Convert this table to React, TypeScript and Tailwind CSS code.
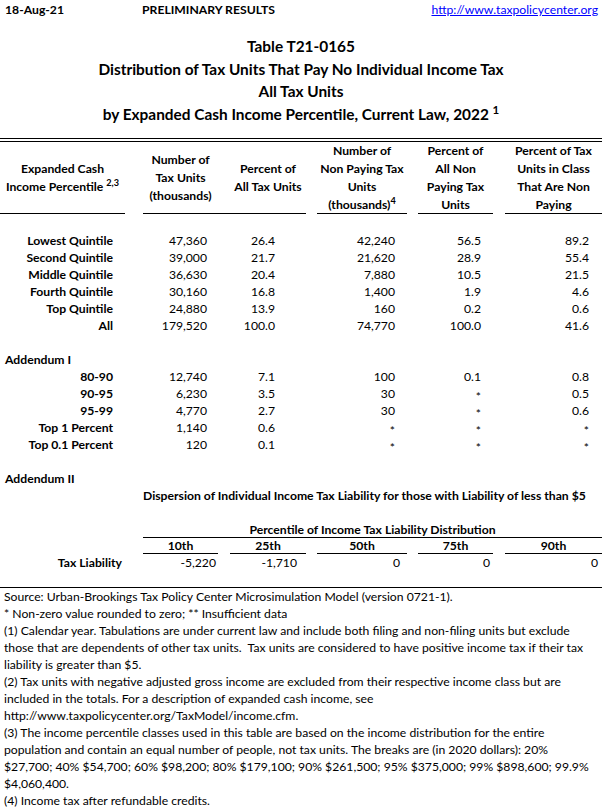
import * as React from 'react';

type Row = { label: string; v: string[] };

const quintiles: Row[] = [
  { label: 'Lowest Quintile', v: ['47,360', '26.4', '42,240', '56.5', '89.2'] },
  { label: 'Second Quintile', v: ['39,000', '21.7', '21,620', '28.9', '55.4'] },
  { label: 'Middle Quintile', v: ['36,630', '20.4', '7,880', '10.5', '21.5'] },
  { label: 'Fourth Quintile', v: ['30,160', '16.8', '1,400', '1.9', '4.6'] },
  { label: 'Top Quintile', v: ['24,880', '13.9', '160', '0.2', '0.6'] },
  { label: 'All', v: ['179,520', '100.0', '74,770', '100.0', '41.6'] },
];

const addendum: Row[] = [
  { label: '80-90', v: ['12,740', '7.1', '100', '0.1', '0.8'] },
  { label: '90-95', v: ['6,230', '3.5', '30', '*', '0.5'] },
  { label: '95-99', v: ['4,770', '2.7', '30', '*', '0.6'] },
  { label: 'Top 1 Percent', v: ['1,140', '0.6', '*', '*', '*'] },
  { label: 'Top 0.1 Percent', v: ['120', '0.1', '*', '*', '*'] },
];

const notes = [
  'Source: Urban-Brookings Tax Policy Center Microsimulation Model (version 0721-1).',
  '* Non-zero value rounded to zero; ** Insufficient data',
  '(1) Calendar year. Tabulations are under current law and include both filing and non-filing units but exclude',
  'those that are dependents of other tax units.  Tax units are considered to have positive income tax if their tax',
  'liability is greater than $5.',
  '(2) Tax units with negative adjusted gross income are excluded from their respective income class but are',
  'included in the totals. For a description of expanded cash income, see',
  'http://www.taxpolicycenter.org/TaxModel/income.cfm.',
  '(3) The income percentile classes used in this table are based on the income distribution for the entire',
  'population and contain an equal number of people, not tax units. The breaks are (in 2020 dollars): 20%',
  '$27,700; 40% $54,700; 60% $98,200; 80% $179,100; 90% $261,500; 95% $375,000; 99% $898,600; 99.9%',
  '$4,060,400.',
  '(4) Income tax after refundable credits.',
];

function Val({ v }: { v: string }) {
  if (v === '*') return <span className="relative top-[3px]">*</span>;
  return <>{v}</>;
}

// column widths: 125 | 18 | 75 | 12 | 76 | 11 | 90 | 11 | 75 | 12 | 97
function DataRow({ row }: { row: Row }) {
  return (
    <div className="flex h-[17px] items-center leading-[17px]">
      <div className="w-[125px] shrink-0 pr-[12px] text-right font-bold">{row.label}</div>
      <div className="ml-[18px] w-[75px] shrink-0 pr-[11px] text-right"><Val v={row.v[0]} /></div>
      <div className="ml-[12px] w-[76px] shrink-0 pr-[31px] text-right"><Val v={row.v[1]} /></div>
      <div className="ml-[11px] w-[90px] shrink-0 pr-[12px] text-right"><Val v={row.v[2]} /></div>
      <div className="ml-[11px] w-[75px] shrink-0 pr-[12px] text-right"><Val v={row.v[3]} /></div>
      <div className="ml-[12px] w-[97px] shrink-0 pr-[13px] text-right"><Val v={row.v[4]} /></div>
    </div>
  );
}

export default function App() {
  return (
    <div className="w-[602px] bg-white text-[12.2px] text-black font-['Lato',sans-serif]">
      {/* top line */}
      <div className="flex h-[20px] items-center font-bold">
        <span className="w-[142px] pl-[5px]">18-Aug-21</span>
        <span>PRELIMINARY RESULTS</span>
        <span className="ml-auto pr-[4px] font-normal text-[#0000ff] underline">
          http://www.taxpolicycenter.org
        </span>
      </div>

      {/* title */}
      <div className="mt-[15px] text-center text-[15.4px] font-bold leading-[22.5px]">
        <div>Table T21-0165</div>
        <div>Distribution of Tax Units That Pay No Individual Income Tax</div>
        <div>All Tax Units</div>
        <div>
          by Expanded Cash Income Percentile, Current Law, 2022 <sup>1</sup>
        </div>
      </div>

      <div className="mt-[13px] h-[4px] border-y border-black" />

      {/* column headers */}
      <div className="flex h-[72px] font-bold leading-[18px]">
        <div className="flex w-[125px] shrink-0 flex-col items-center justify-center border-b border-black text-center">
          <div>Expanded Cash</div>
          <div>
            Income Percentile <sup>2,3</sup>
          </div>
        </div>
        <div className="ml-[18px] flex w-[163px] shrink-0 border-b border-black">
          <div className="flex w-[75px] flex-col justify-center text-center">
            <div>Number of</div>
            <div>Tax Units</div>
            <div>(thousands)</div>
          </div>
          <div className="ml-[12px] flex w-[76px] flex-col justify-center text-center">
            <div>Percent of</div>
            <div>All Tax Units</div>
          </div>
        </div>
        <div className="ml-[11px] flex w-[90px] shrink-0 flex-col justify-center border-b border-black text-center">
          <div>Number of</div>
          <div>Non Paying Tax</div>
          <div>Units</div>
          <div>
            (thousands)<sup>4</sup>
          </div>
        </div>
        <div className="ml-[11px] flex w-[75px] shrink-0 flex-col justify-center border-b border-black text-center">
          <div>Percent of</div>
          <div>All Non</div>
          <div>Paying Tax</div>
          <div>Units</div>
        </div>
        <div className="ml-[12px] flex w-[97px] shrink-0 flex-col justify-center border-b border-black text-center">
          <div>Percent of Tax</div>
          <div>Units in Class</div>
          <div>That Are Non</div>
          <div>Paying</div>
        </div>
      </div>

      {/* body */}
      <div className="mt-[18px]">
        {quintiles.map(r => (
          <DataRow key={r.label} row={r} />
        ))}
        <div className="h-[17px]" />
        <div className="h-[17px] pl-[5px] font-bold leading-[17px]">Addendum I</div>
        {addendum.map(r => (
          <DataRow key={r.label} row={r} />
        ))}
        <div className="h-[17px]" />
        <div className="h-[17px] pl-[5px] font-bold leading-[17px]">Addendum II</div>
        <div className="h-[17px] pl-[143px] font-bold leading-[17px] whitespace-nowrap">
          Dispersion of Individual Income Tax Liability for those with Liability of less than $5
        </div>
        <div className="h-[17px]" />
        <div className="ml-[143px] h-[17px] border-b border-black text-center font-bold leading-[17px]">
          Percentile of Income Tax Liability Distribution
        </div>
        <div className="flex h-[16px] font-bold leading-[16px]">
          <div className="ml-[143px] w-[75px] shrink-0 border-b border-black text-center">10th</div>
          <div className="ml-[12px] w-[76px] shrink-0 border-b border-black text-center">25th</div>
          <div className="ml-[11px] w-[90px] shrink-0 border-b border-black text-center">50th</div>
          <div className="ml-[11px] w-[75px] shrink-0 border-b border-black text-center">75th</div>
          <div className="ml-[12px] w-[97px] shrink-0 border-b border-black text-center">90th</div>
        </div>
        <div className="flex h-[17px] leading-[17px]">
          <div className="w-[125px] shrink-0 pr-[3px] text-right font-bold">Tax Liability</div>
          <div className="ml-[18px] w-[75px] shrink-0 pr-[2px] text-right">-5,220</div>
          <div className="ml-[12px] w-[76px] shrink-0 pr-[9px] text-right">-1,710</div>
          <div className="ml-[11px] w-[90px] shrink-0 pr-[7px] text-right">0</div>
          <div className="ml-[11px] w-[75px] shrink-0 pr-[3px] text-right">0</div>
          <div className="ml-[12px] w-[97px] shrink-0 pr-[4px] text-right">0</div>
        </div>
        <div className="h-[17px] border-b border-black" />
      </div>

      {/* notes */}
      <div className="pl-[4px] leading-[17px]">
        {notes.map((n, i) => (
          <div key={i} className="h-[17px] whitespace-pre">
            {n}
          </div>
        ))}
      </div>
    </div>
  );
}
